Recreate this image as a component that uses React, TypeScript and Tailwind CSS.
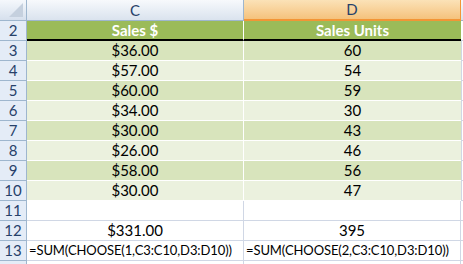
import React from "react";

const rows: [number, string, string][] = [
  [3, "$36.00", "60"],
  [4, "$57.00", "54"],
  [5, "$60.00", "59"],
  [6, "$34.00", "30"],
  [7, "$30.00", "43"],
  [8, "$26.00", "46"],
  [9, "$58.00", "56"],
  [10, "$30.00", "47"],
];

const RowNum = ({ n }: { n: number | string }) => (
  <div className="w-[27px] shrink-0 h-full flex items-center justify-center bg-[#e4ecf7] border-r border-b border-[#9eb6ce] text-[#27416a]">
    {n}
  </div>
);

const App = () => {
  return (
    <div
      className="w-[463px] h-[264px] bg-white overflow-hidden text-[15px] text-black leading-none"
      style={{ fontFamily: "Lato, 'Open Sans', sans-serif" }}
    >
      {/* column headers */}
      <div className="flex h-[21px]">
        <div className="w-[27px] shrink-0 h-full bg-gradient-to-b from-[#f5f8fc] to-[#d6e0ed] border-r border-b border-[#9eb6ce] relative">
          <div className="absolute right-[3px] bottom-[3px] w-0 h-0 border-l-[14px] border-l-transparent border-b-[14px] border-b-[#c5d0de]" />
        </div>
        <div className="w-[217px] shrink-0 h-full flex items-center justify-center bg-gradient-to-b from-[#f7f9fc] to-[#dae3ee] border-r border-b border-[#9eb6ce] text-[#27416a]">
          C
        </div>
        <div className="w-[217px] shrink-0 h-full flex items-center justify-center bg-gradient-to-b from-[#fbe2b7] to-[#f5c27c] border-r border-b-2 border-[#f29536] text-[#27416a]">
          D
        </div>
        <div className="flex-1 h-full bg-gradient-to-b from-[#f7f9fc] to-[#dae3ee] border-b border-[#9eb6ce]" />
      </div>

      {/* row 2 header */}
      <div className="flex h-[20px]">
        <RowNum n={2} />
        <div className="w-[217px] shrink-0 flex items-center justify-center bg-[#9bbb59] text-white font-bold border-r border-white border-b-2 border-b-black">
          Sales $
        </div>
        <div className="w-[217px] shrink-0 flex items-center justify-center bg-[#9bbb59] text-white font-bold border-b-2 border-b-black">
          Sales Units
        </div>
        <div className="flex-1 border-b border-[#d0d7e5]" />
      </div>

      {rows.map(([n, c, d], i) => {
        const bg = i % 2 === 0 ? "bg-[#d8e4bc]" : "bg-[#ebf1de]";
        return (
          <div key={n} className="flex h-[20px]">
            <RowNum n={n} />
            <div className={`w-[217px] shrink-0 flex items-center justify-center ${bg} border-r border-b border-white`}>
              {c}
            </div>
            <div className={`w-[217px] shrink-0 flex items-center justify-center ${bg} border-b border-white`}>
              {d}
            </div>
            <div className="flex-1 border-l border-b border-[#d0d7e5]" />
          </div>
        );
      })}

      {[
        [11, "", ""],
        [12, "$331.00", "395"],
      ].map(([n, c, d]) => (
        <div key={n} className="flex h-[20px]">
          <RowNum n={n} />
          <div className="w-[217px] shrink-0 flex items-center justify-center border-r border-b border-[#d0d7e5]">
            {c}
          </div>
          <div className="w-[217px] shrink-0 flex items-center justify-center border-r border-b border-[#d0d7e5]">
            {d}
          </div>
          <div className="flex-1 border-b border-[#d0d7e5]" />
        </div>
      ))}

      <div className="flex h-[20px]">
        <RowNum n={13} />
        <div className="w-[217px] shrink-0 flex items-center pl-[2px] border-r border-b border-[#d0d7e5] whitespace-nowrap text-[13px] tracking-[-0.1px]">
          =SUM(CHOOSE(1,C3:C10,D3:D10))
        </div>
        <div className="w-[217px] shrink-0 flex items-center pl-[2px] border-r border-b border-[#d0d7e5] whitespace-nowrap text-[13px] tracking-[-0.1px]">
          =SUM(CHOOSE(2,C3:C10,D3:D10))
        </div>
        <div className="flex-1 border-b border-[#d0d7e5]" />
      </div>

      <div className="flex h-[20px]">
        <RowNum n="" />
        <div className="w-[217px] shrink-0 border-r border-[#d0d7e5]" />
        <div className="w-[217px] shrink-0 border-r border-[#d0d7e5]" />
      </div>
    </div>
  );
};

export default App;
